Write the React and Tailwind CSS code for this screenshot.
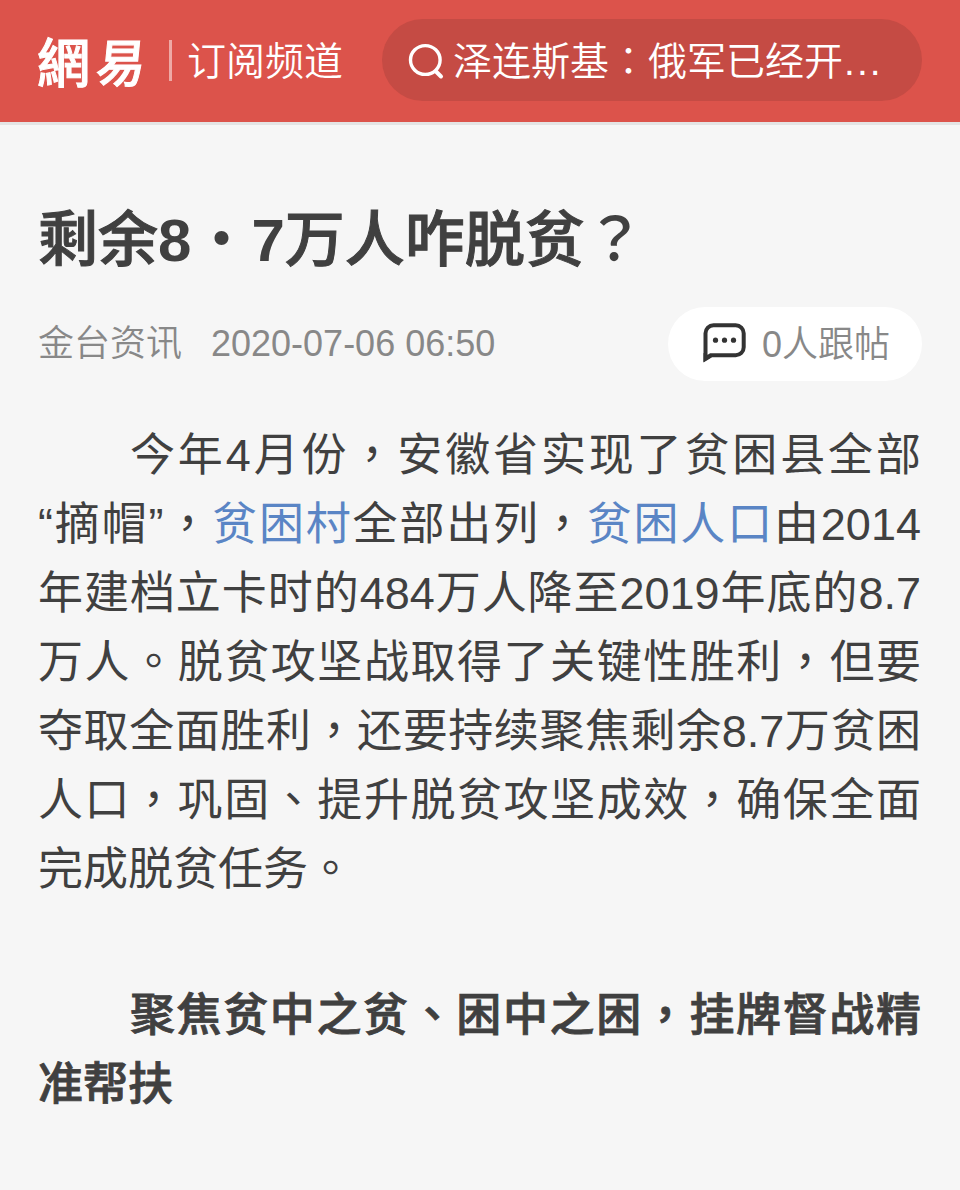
const META = { source: '金台资讯', time: '2020-07-06 06:50', replies: 0 };

const PARAGRAPHS = [
  {
    id: 'intro',
    parts: [
      { text: '今年4月份，安徽省实现了贫困县全部“摘帽”，' },
      { text: '贫困村', link: true },
      { text: '全部出列，' },
      { text: '贫困人口', link: true },
      { text: '由2014年建档立卡时的484万人降至2019年底的8.7万人。脱贫攻坚战取得了关键性胜利，但要夺取全面胜利，还要持续聚焦剩余8.7万贫困人口，巩固、提升脱贫攻坚成效，确保全面完成脱贫任务。' },
    ],
  },
  {
    id: 'focus',
    bold: true,
    parts: [{ text: '聚焦贫中之贫、困中之困，挂牌督战精准帮扶' }],
  },
];

// full-width punctuation uses the TC face so it sits in the middle of its cell
function Text({ children }) {
  return children.split(/([，。、：？])/).map((s, i) =>
    i % 2 ? (
      <span key={i} className="font-['Liberation_Sans','Noto_Sans_CJK_TC',sans-serif]" lang="zh-TW">{s}</span>
    ) : (
      s
    )
  );
}

function SearchIcon() {
  return (
    <svg width="38" height="40" viewBox="0 0 38 40" fill="none" stroke="#fff" className="shrink-0">
      <ellipse cx="18.3" cy="20" rx="14.8" ry="14.4" strokeWidth="3.4" />
      <path d="M29 31.5 34 36.5" strokeWidth="4" strokeLinecap="round" />
    </svg>
  );
}

function ReplyIcon() {
  return (
    <svg width="44" height="42" viewBox="0 0 44 42" fill="none" className="shrink-0">
      <path d="M3.5 35.5V10.3a8 8 0 0 1 8-8h22.2a8 8 0 0 1 8 8v14a8 8 0 0 1-8 8H8.7z" stroke="#333" strokeWidth="4" />
      <path d="M1.5 30v9.5l8.5-5.2z" fill="#333" />
      <circle cx="13.5" cy="17.2" r="2.6" fill="#333" />
      <circle cx="22.5" cy="17.2" r="2.6" fill="#333" />
      <circle cx="31.5" cy="17.2" r="2.6" fill="#333" />
    </svg>
  );
}

function Logo() {
  return (
    <div className="flex w-[112px] shrink-0 items-center gap-[7px] whitespace-nowrap font-['Noto_Sans_CJK_TC',sans-serif] font-medium leading-[80px] [-webkit-text-stroke:1px_white]">
      <span className="text-[53px]">網</span>
      <span className="-skew-x-6 scale-y-105 text-[49px]">易</span>
    </div>
  );
}

function Header() {
  return (
    <header className="flex h-[122px] items-center bg-[#dc534b] pb-[2px] pl-[37px] pr-[38px] text-white">
      <Logo />
      <div className="ml-[20px] h-[41px] w-[3px] bg-white/50" />
      <div className="ml-[15px] pt-[3px] text-[39px] font-[350] leading-[60px]">订阅频道</div>
      <div className="ml-auto flex h-[82px] w-[540px] items-center rounded-full bg-[#c54b44] pl-[25px]">
        <SearchIcon />
        <span className="ml-[8px] whitespace-nowrap pt-[3px] text-[39px] font-[350] leading-[60px]">
          <Text>泽连斯基：俄军已经开</Text>
          <span className="ml-px tracking-[2px]">...</span>
        </span>
      </div>
    </header>
  );
}

export default function App() {
  return (
    <div lang="zh-CN" className="h-[1190px] w-[960px] overflow-hidden bg-[#f6f6f6] font-['Liberation_Sans','Noto_Sans_CJK_SC',sans-serif] text-[#404040] [text-spacing-trim:space-all]">
      <Header />
      <main className="border-t-[3px] border-[#e4e4e4] px-[38px]">
        <h1 className="mt-[74px] whitespace-nowrap text-[60px] font-medium leading-[84px] [-webkit-text-stroke:1px_#404040]">
          剩余<span className="font-bold [-webkit-text-stroke:0]">8</span>
          <span className="font-['Noto_Sans_CJK_SC',sans-serif] leading-none [-webkit-text-stroke:0]">·</span>
          <span className="font-bold [-webkit-text-stroke:0]">7</span>万人咋脱贫
          <span lang="zh-TW" className="font-['Noto_Sans_CJK_TC',sans-serif] leading-none [-webkit-text-stroke:0]">？</span>
        </h1>
        <div className="mt-[24px] flex h-[74px] items-center text-[36px] leading-[54px] text-[#888]">
          <span className="font-[350]">{META.source}</span>
          <span className="ml-[29px]">{META.time}</span>
          <div className="ml-auto flex h-full w-[254px] items-center rounded-full bg-white pl-[34px]">
            <ReplyIcon />
            <span className="ml-[16px] pt-[2px] font-[350]">{META.replies}人跟帖</span>
          </div>
        </div>
        <article className="mt-[40px] pr-px text-justify indent-[92px] text-[45px] leading-[69px]">
          {PARAGRAPHS.map((p) => (
            <p key={p.id} className={p.bold ? 'mt-[77px] font-medium [-webkit-text-stroke:0.8px_#404040]' : ''}>
              {p.parts.map((part, i) =>
                part.link ? (
                  <a key={i} className="text-[#5a85c5]">{part.text}</a>
                ) : (
                  <Text key={i}>{part.text}</Text>
                )
              )}
            </p>
          ))}
        </article>
      </main>
    </div>
  );
}
